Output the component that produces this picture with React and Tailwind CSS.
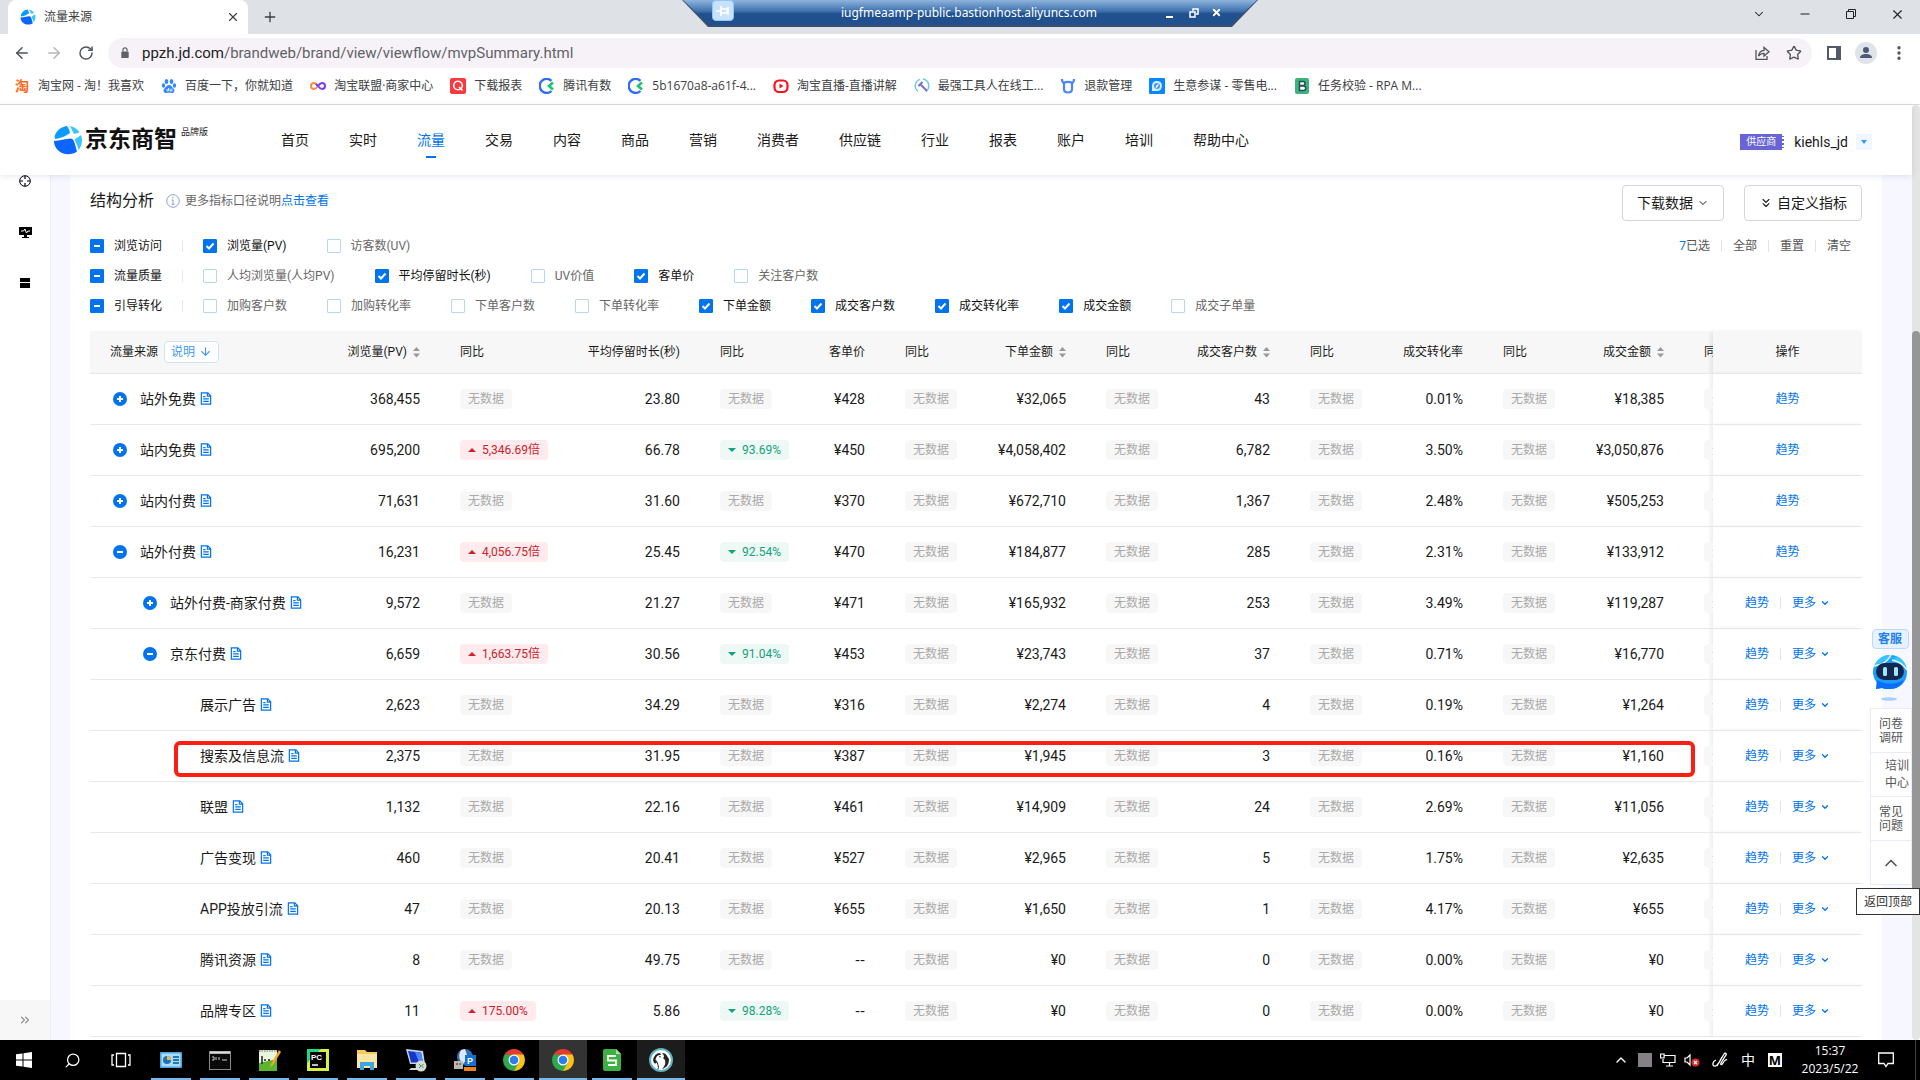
import React from "react";
import {
  ArrowLeft, ArrowRight, RotateCw, X, Plus, Minus, ChevronDown, ChevronUp, Star, MoreVertical,
  ChevronsDown, ChevronsRight, Search, ArrowDown,
} from "lucide-react";

const UI = "font-['Open_Sans','Noto_Sans_CJK_SC',sans-serif]";

function Globe({ className }) {
  return (
    <svg viewBox="0 0 30 30" className={className} aria-hidden="true">
      <path d="M2 10C4 5 9 1.500 14 1c1.500 2 2.500 4 3 7-4 3-8 5-14.500 6C1.500 13 1.500 11.500 2 10z" fill="#0a9bff" />
      <path d="M17 1c4 .5 7.500 3 9.500 6.500L21 9c-1-2-2.500-5-4-8z" fill="#38c6ff" />
      <path d="M28 10c2 5 1 11-2.500 15-.5-3-2-6.500-4-10.500z" fill="#3cc4ff" />
      <path d="M1 16c6 0 11-2.500 16.500-2.500 3.500 0 4 4 6.500 13C20 29.500 14 30 9 28 4 25.500 1 21 1 16z" fill="#0a66ff" />
    </svg>
  );
}

function ChromeLogo() {
  return (
    <svg viewBox="0 0 24 24" className="h-6 w-6" aria-hidden="true">
      <path d="M12 12 2.5 6.500A11 11 0 0 1 21.500 6.500Z" fill="#e33b2e" />
      <path d="M12 12 21.500 6.500A11 11 0 0 1 12 23Z" fill="#fbc116" />
      <path d="M12 12V23A11 11 0 0 1 2.500 6.500Z" fill="#2da94f" />
      <path d="M12 6.500h9.500L17 15z" fill="#fbc116" />
      <path d="M7.200 14.700 2.500 6.500 12 7z" fill="#2da94f" />
      <path d="m16.800 14.700L12 23l-4.800-8.300z" fill="#2da94f" />
      <circle cx="12" cy="12" r="5.500" fill="#fff" />
      <circle cx="12" cy="12" r="4.300" fill="#2f7cf0" />
    </svg>
  );
}

const bookmarks = [
  ["淘宝网 - 淘！我喜欢", "tao"],
  ["百度一下，你就知道", "paw"],
  ["淘宝联盟·商家中心", "inf"],
  ["下载报表", "q"],
  ["腾讯有数", "c"],
  ["5b1670a8-a61f-4...", "c"],
  ["淘宝直播-直播讲解", "live"],
  ["最强工具人在线工...", "tool"],
  ["退款管理", "bull"],
  ["生意参谋 - 零售电...", "comp"],
  ["任务校验 - RPA M...", "b"],
];

function BookmarkIcon({ kind }) {
  if (kind === "tao") return <span className="w-4 text-center text-sm font-bold leading-4 text-[#ff6a1a]">淘</span>;
  const art = {
    paw: (
      <g fill="#3385ff">
        <ellipse cx="5.500" cy="3.500" rx="1.800" ry="2.500" /><ellipse cx="10.500" cy="3.500" rx="1.800" ry="2.500" />
        <ellipse cx="2.500" cy="7.500" rx="1.600" ry="2.200" /><ellipse cx="13.500" cy="7.500" rx="1.600" ry="2.200" />
        <path d="M8 7c2 0 3 2 4.500 3.500 2 2 .5 5-2 4.500-1.600-.3-3.400-.3-5 0-2.500.5-4-2.500-2-4.500C5 9 6 7 8 7z" />
        <path d="M6 11v2h1.500v-3M9 10.500V13h2v-2.500" fill="none" stroke="#fff" strokeWidth=".8" />
      </g>
    ),
    inf: (
      <g fill="none" strokeWidth="2">
        <path d="M8 8C6 5.500 5 5 4 5a3 3 0 0 0 0 6c1.500 0 2.500-1 4-3" stroke="#ff8a3c" />
        <path d="M8 8c1.500-2 2.500-3 4-3a3 3 0 0 1 0 6c-1.500 0-2.500-1-4-3L6 5.800" stroke="#7a3cf0" />
      </g>
    ),
    q: (
      <g>
        <rect width="16" height="16" rx="2" fill="#f9393f" />
        <circle cx="8" cy="7.500" r="4.300" fill="none" stroke="#fff" strokeWidth="1.600" />
        <path d="m9 9 3.500 3.500" stroke="#fff" strokeWidth="1.600" />
      </g>
    ),
    c: (
      <g fill="none">
        <path d="M12.500 2.800A7 7 0 1 0 12.500 13" stroke="#2f6bff" strokeWidth="2.400" />
        <path d="m14 4.500-4 3.500 4 3.500" stroke="#1fc46a" strokeWidth="2.600" />
      </g>
    ),
    live: (
      <g>
        <rect x="1.500" y="2.500" width="13" height="11.500" rx="4.500" fill="none" stroke="#f5141e" strokeWidth="2.200" />
        <path d="M6.500 5.500v5l4-2.500z" fill="#f5141e" />
      </g>
    ),
    tool: (
      <g fill="none">
        <path d="M6 1.300A7 7 0 0 0 4 13.500M9 1a7 7 0 0 1 3 12.500" stroke="#63cbe8" strokeWidth="1.400" />
        <path d="m6 6 7 7M4.500 8 8.500 4" stroke="#7c6fc8" strokeWidth="2" />
      </g>
    ),
    bull: (
      <g fill="none" stroke="#4a86ff" strokeWidth="2.200">
        <path d="M4 5v6c0 2.500 2 3.500 4 3.500s4-1 4-3.500V5c-1.500-1.500-6.500-1.500-8 0z" />
        <path d="M4 5C2.500 4.500 2 3 2 1M12 5c1.500-.5 2-2 2-4" />
      </g>
    ),
    comp: (
      <g>
        <rect width="16" height="16" rx="1" fill="#0a86ff" />
        <path d="M3 13V7a5 5 0 1 1 5 6z" fill="#d8ecff" />
        <circle cx="8" cy="8" r="3" fill="#3b9bff" /><path d="m10.500 5-2 4-2.500 2 1.500-3.500z" fill="#fff" />
      </g>
    ),
    b: (
      <g>
        <rect x="1" width="14" height="16" rx="2" fill="#3db37a" />
        <path d="M5.500 3.500h3.500a1.800 1.800 0 0 1 0 4H5.500zM5.500 8h4a2.200 2.200 0 0 1 0 4.500h-4z" fill="#fff" stroke="#1f4f5a" strokeWidth="1.500" />
      </g>
    ),
  };
  return <svg viewBox="0 0 16 16" className="h-4 w-4 shrink-0" aria-hidden="true">{art[kind]}</svg>;
}

function BrowserChrome() {
  return (
    <header className={`shrink-0 ${UI}`}>
      <div className="relative flex h-[34px] items-center bg-[#dee1e6] pl-2">
        <div className="flex h-full w-[240px] items-center rounded-t-lg bg-white pl-3 pr-2">
          <Globe className="h-4 w-4" />
          <span className="ml-2 flex-1 text-xs text-[#3c4043]">流量来源</span>
          <button aria-label="关闭标签页" className="text-[#3c4043]"><X size={14} strokeWidth={2} /></button>
        </div>
        <button aria-label="新标签页" className="ml-[14px] text-[#3c4043]"><Plus size={16} strokeWidth={2} /></button>
        <div className="ml-auto flex h-7 items-center self-start text-[#202124]">
          <button aria-label="搜索标签页" className="grid w-[46px] place-items-center"><ChevronDown size={14} strokeWidth={1.8} /></button>
          <button aria-label="最小化" className="grid w-[46px] place-items-center"><Minus size={14} strokeWidth={1.8} /></button>
          <button aria-label="还原" className="grid w-[46px] place-items-center">
            <svg viewBox="0 0 12 12" className="h-3 w-3" fill="none" stroke="currentColor"><path d="M1.500 3.500h7v7h-7zM3.500 3.500v-2h7v7h-2" /></svg>
          </button>
          <button aria-label="关闭" className="grid w-[46px] place-items-center"><X size={15} strokeWidth={1.8} /></button>
        </div>
        <div className="absolute left-[682px] top-0 h-[27px] w-[576px] bg-[#3a4f70] [clip-path:polygon(0_0,100%_0,550px_100%,26px_100%)]">
          <div className="flex h-[25px] items-center bg-gradient-to-b from-[#8fb4dd] via-[#3e71ae] via-45% to-[#21508f] to-55% pl-[30px] pr-[36px] text-white [clip-path:polygon(1px_0,575px_0,549px_100%,27px_100%)]">
            <span className="grid h-[21px] w-[22px] self-start place-items-center rounded-sm border border-[#90c8f8] bg-[#c8e2fb]">
              <svg viewBox="0 0 14 10" className="h-[10px] w-[14px]" stroke="#fff" fill="none" strokeWidth="1.600"><path d="M0 5h5M5 0v10M5 3h6v4H5M12 1v8" /></svg>
            </span>
            <span className="flex-1 pl-[38px] text-center font-['Noto_Sans'] text-xs">iugfmeaamp-public.bastionhost.aliyuncs.com</span>
            <button aria-label="最小化远程会话" className="mt-2 h-[2px] w-[7px] bg-white" />
            <button aria-label="还原远程会话" className="ml-4">
              <svg viewBox="0 0 10 10" className="h-[10px] w-[10px]" fill="none" stroke="#fff" strokeWidth="1.500"><path d="M1 4h5v5H1zM4 3V1h5v5H7" /></svg>
            </button>
            <button aria-label="关闭远程会话" className="ml-3"><X size={11} strokeWidth={4} /></button>
          </div>
        </div>
      </div>
      <div className="flex h-[38px] items-center bg-white pl-[13px] pr-3 text-[#505458]">
        <button aria-label="后退"><ArrowLeft size={18} /></button>
        <button aria-label="前进" className="ml-[14px] text-[#b4b6b9]"><ArrowRight size={18} /></button>
        <button aria-label="刷新" className="ml-[15px]"><RotateCw size={16} strokeWidth={2.2} /></button>
        <div className="ml-[14px] flex h-[30px] flex-1 items-center rounded-full bg-[#f7f2f7] pl-3 pr-[10px]">
          <svg viewBox="0 0 10 13" className="h-3 w-[10px]" aria-hidden="true"><rect x="1" y="5" width="8" height="7" rx="1" fill="#5f6368" /><path d="M2.800 5V3.200a2.200 2.200 0 0 1 4.400 0V5" fill="none" stroke="#5f6368" strokeWidth="1.300" /></svg>
          <span className="ml-3 flex-1 font-['Roboto'] text-[15px] text-[#5f6368]"><span className="text-[#202124]">ppzh.jd.com</span>/brandweb/brand/view/viewflow/mvpSummary.html</span>
          <button aria-label="分享">
            <svg viewBox="0 0 16 16" className="h-4 w-4" fill="none" stroke="currentColor" strokeWidth="1.300"><path d="M2 5v9.300h11V11M4.500 11c.5-3.500 2.500-5.500 5.500-5.700V2.500L15 6.800l-5 4.300V8.300C7.500 8.300 6 9 4.500 11z" /></svg>
          </button>
          <button aria-label="收藏" className="ml-4"><Star size={16} strokeWidth={2} /></button>
        </div>
        <button aria-label="侧边栏" className="ml-[15px]">
          <svg viewBox="0 0 14 14" className="h-[14px] w-[14px]"><path d="M1 1h12v12H1z" fill="none" stroke="#53586b" strokeWidth="2" /><path d="M9 0h5v14H9z" fill="#53586b" /></svg>
        </button>
        <button aria-label="用户" className="ml-[14px] grid h-[22px] w-[22px] place-items-center rounded-full bg-[#dfe3ea]">
          <svg viewBox="0 0 14 14" className="h-[14px] w-[14px]" fill="#4d5776"><circle cx="7" cy="4" r="3" /><path d="M1 12c0-3 3-4 6-4s6 1 6 4z" /></svg>
        </button>
        <button aria-label="菜单" className="ml-[13px]"><MoreVertical size={18} strokeWidth={2.5} /></button>
      </div>
      <nav className="flex h-[33px] items-center gap-[17px] border-b border-[#d9dbde] bg-white pb-1 pl-[14px] text-xs text-[#3c4043]">
        {bookmarks.map(([t, k]) => (
          <a key={t} href="#" className="flex items-center gap-2 whitespace-nowrap"><BookmarkIcon kind={k} />{t}</a>
        ))}
      </nav>
    </header>
  );
}

const navItems = ["首页", "实时", "流量", "交易", "内容", "商品", "营销", "消费者", "供应链", "行业", "报表", "账户", "培训", "帮助中心"];

function SiteHeader() {
  return (
    <div className="relative z-10 flex h-[70px] shrink-0 items-center bg-white pl-[53px] pr-10 shadow-[0_1px_6px_rgba(60,70,120,0.14)]">
      <Globe className="h-[30px] w-[30px]" />
      <span className="ml-[2px] text-[23px] font-bold leading-7 text-[#111]">京东商智</span>
      <span className="ml-1 mb-4 w-[100px] text-[9px] leading-3 text-[#222]">品牌版</span>
      <nav className="flex gap-10 text-sm text-[#1a1a1a]">
        {navItems.map((t) => (
          <a key={t} href="#" className={t === "流量" ? "relative text-[#0073ed]" : "whitespace-nowrap"}>
            {t}
            {t === "流量" && <span className="absolute -bottom-2 left-[9px] h-[2px] w-[10px] bg-[#0073ed]" />}
          </a>
        ))}
      </nav>
      <div className="ml-auto flex items-center pt-1">
        <span className="flex h-4 w-11 items-center justify-center border-r-2 border-dotted border-white bg-[#6a64d6] text-[10px] leading-4 text-white">供应商</span>
        <span className="ml-[10px] text-sm text-[#1a1a1a]">kiehls_jd</span>
        <button aria-label="账户菜单" className="ml-2 grid h-4 w-4 place-items-center bg-[#eef6ff]">
          <svg viewBox="0 0 6 4" className="h-1 w-[6px]"><path d="M0 0h6L3 4z" fill="#3d98f2" /></svg>
        </button>
      </div>
    </div>
  );
}

function Check({ label, on = false, mixed = false }) {
  const marked = on || mixed;
  return (
    <label className={`flex items-center gap-[10px] whitespace-nowrap ${marked ? "text-[#111]" : "text-[#666]"}`}>
      <span className="relative h-[14px] w-[14px]">
        <input
          type="checkbox"
          defaultChecked={marked}
          className="block h-[14px] w-[14px] appearance-none rounded-[1px] border border-[#b5d5fb] bg-white checked:border-[#0073ed] checked:bg-[#0073ed]"
        />
        {marked && (
          <svg viewBox="0 0 14 14" className="pointer-events-none absolute inset-0 h-[14px] w-[14px]" fill="none" stroke="#fff" strokeWidth="2">
            {mixed ? <path d="M4 7h6" /> : <path d="m3.500 7 2.500 2.500L10.500 4.500" />}
          </svg>
        )}
      </span>
      {label}
    </label>
  );
}

const filters = [
  ["浏览访问", [["浏览量(PV)", 1], ["访客数(UV)", 0]]],
  ["流量质量", [["人均浏览量(人均PV)", 0], ["平均停留时长(秒)", 1], ["UV价值", 0], ["客单价", 1], ["关注客户数", 0]]],
  ["引导转化", [["加购客户数", 0], ["加购转化率", 0], ["下单客户数", 0], ["下单转化率", 0], ["下单金额", 1], ["成交客户数", 1], ["成交转化率", 1], ["成交金额", 1], ["成交子单量", 0]]],
];

const rows = [
  [0, "+", "站外免费", "368,455", "", "23.80", "", "¥428", "¥32,065", "43", "0.01%", "¥18,385"],
  [0, "+", "站内免费", "695,200", "5,346.69倍", "66.78", "93.69%", "¥450", "¥4,058,402", "6,782", "3.50%", "¥3,050,876"],
  [0, "+", "站内付费", "71,631", "", "31.60", "", "¥370", "¥672,710", "1,367", "2.48%", "¥505,253"],
  [0, "-", "站外付费", "16,231", "4,056.75倍", "25.45", "92.54%", "¥470", "¥184,877", "285", "2.31%", "¥133,912"],
  [1, "+", "站外付费-商家付费", "9,572", "", "21.27", "", "¥471", "¥165,932", "253", "3.49%", "¥119,287"],
  [1, "-", "京东付费", "6,659", "1,663.75倍", "30.56", "91.04%", "¥453", "¥23,743", "37", "0.71%", "¥16,770"],
  [2, "", "展示广告", "2,623", "", "34.29", "", "¥316", "¥2,274", "4", "0.19%", "¥1,264"],
  [2, "", "搜索及信息流", "2,375", "", "31.95", "", "¥387", "¥1,945", "3", "0.16%", "¥1,160"],
  [2, "", "联盟", "1,132", "", "22.16", "", "¥461", "¥14,909", "24", "2.69%", "¥11,056"],
  [2, "", "广告变现", "460", "", "20.41", "", "¥527", "¥2,965", "5", "1.75%", "¥2,635"],
  [2, "", "APP投放引流", "47", "", "20.13", "", "¥655", "¥1,650", "1", "4.17%", "¥655"],
  [2, "", "腾讯资源", "8", "", "49.75", "", "--", "¥0", "0", "0.00%", "¥0"],
  [2, "", "品牌专区", "11", "175.00%", "5.86", "98.28%", "--", "¥0", "0", "0.00%", "¥0"],
];

const headers = [
  ["浏览量(PV)", true, "w-[110px]", "w-[128px]"],
  ["平均停留时长(秒)", false, "w-[132px]", "w-[100px]"],
  ["客单价", false, "w-[85px]", "w-[92px]"],
  ["下单金额", true, "w-[109px]", "w-[92px]"],
  ["成交客户数", true, "w-[112px]", "w-[92px]"],
  ["成交转化率", false, "w-[101px]", "w-[92px]"],
  ["成交金额", true, "w-[109px]", "w-[29px]"],
];

const indents = ["pl-[23px]", "pl-[53px]", "pl-[110px]"];

function Tag({ value, dir }) {
  const base = "inline-flex h-5 items-center rounded-sm px-2 text-xs whitespace-nowrap align-middle";
  if (!value) return <span className={`${base} bg-[#f7f7f7] text-[#aaa]`}>无数据</span>;
  const up = dir === "up";
  return (
    <span className={`${base} ${up ? "bg-[#ffebee] text-[#cc2229]" : "bg-[#eef8f5] text-[#12a27b]"}`}>
      <svg viewBox="0 0 8 4" className="mr-[6px] h-1 w-2"><path d={up ? "M0 4h8L4 0z" : "M0 0h8L4 4z"} fill="currentColor" /></svg>
      {value}
    </span>
  );
}

function Sorter() {
  return (
    <svg viewBox="0 0 7 12" className="ml-[6px] h-3 w-[7px]" fill="#999"><path d="M0 5h7L3.500 1zM0 7.500h7l-3.500 4z" /></svg>
  );
}

function DocIcon() {
  return (
    <svg viewBox="0 0 12 14" className="ml-1 h-[13px] w-3 shrink-0" fill="none" stroke="#0073ed" strokeWidth="1.300">
      <path d="M1 1h7l3 3v9H1zM7.500 1v3.500H11M3 5h2.500M3 7.500h6M3 10h6" />
    </svg>
  );
}

function Toggle({ sign }) {
  return (
    <button aria-label={sign === "+" ? "展开" : "收起"} className="mr-[13px] h-[14px] w-[14px]">
      <svg viewBox="0 0 14 14" className="h-[14px] w-[14px]"><circle cx="7" cy="7" r="7" fill="#0073ed" /><path d={sign === "+" ? "M4 7h6M7 4v6" : "M4 7h6"} stroke="#fff" strokeWidth="2" /></svg>
    </button>
  );
}

function DataTable() {
  return (
    <div className="relative mt-[10px]">
      <table className="w-full table-fixed border-collapse text-[#1a1a1a]">
        <thead>
          <tr className="h-[42px] border-b border-[#e8e8ea] bg-[#f7f7f7] text-xs">
            <th className="pl-5 text-left font-normal">
              <div className="flex items-center">流量来源
                <button className="ml-[6px] flex h-[22px] items-center rounded-sm border border-[#cfe4fb] bg-white px-[6px] text-[#3d98f2]">说明<ArrowDown size={13} strokeWidth={2} className="ml-1" /></button>
              </div>
            </th>
            {headers.map(([t, sort, w, w2]) => (
              <React.Fragment key={t}>
                <th className={`pr-5 font-normal ${w}`}><div className="flex items-center justify-end whitespace-nowrap">{t}{sort && <Sorter />}</div></th>
                <th className={`overflow-hidden whitespace-nowrap pl-5 text-left font-normal ${w2}`}>同比</th>
              </React.Fragment>
            ))}
            <th className="w-[149px] font-normal shadow-[-3px_0_3px_rgba(60,40,60,0.07)]">操作</th>
          </tr>
        </thead>
        <tbody>
          {rows.map(([lvl, sign, name, pv, pvY, stay, stayY, price, amt, cust, rate, deal]) => (
            <tr key={name} className="h-[51px] border-b border-[#e8e8ea] text-sm">
              <td className={indents[lvl]}>
                <div className="flex items-center whitespace-nowrap">{sign && <Toggle sign={sign} />}{name}<DocIcon /></div>
              </td>
              {[[pv, pvY, "up"], [stay, stayY, "down"], [price], [amt], [cust], [rate], [deal]].map(([v, y, d], i) => (
                <React.Fragment key={i}>
                  <td className={v === "--" ? "pr-5 text-right font-['DejaVu_Sans']" : "pr-5 text-right"}>{v}</td>
                  <td className="overflow-hidden pl-5"><Tag value={y} dir={d} /></td>
                </React.Fragment>
              ))}
              <td className="shadow-[-3px_0_3px_rgba(60,40,60,0.07)]">
                <div className="flex items-center justify-center text-xs text-[#0073ed]">
                  <a href="#">趋势</a>
                  {lvl > 0 && (
                    <>
                      <span className="mx-[11px] h-3 w-px bg-[#e4e4e4]" />
                      <button className="flex items-center">更多<ChevronDown size={10} strokeWidth={3} className="ml-1" /></button>
                    </>
                  )}
                </div>
              </td>
            </tr>
          ))}
        </tbody>
      </table>
      <div className="pointer-events-none absolute left-[84px] right-[167px] top-[410px] h-9 rounded-md border-4 border-[#fc1e12]" />
    </div>
  );
}

function SideTools() {
  const item = "grid h-11 place-items-center border-b border-[#ebebf5] bg-white text-xs leading-[14px] text-[#555]";
  return (
    <div className="absolute right-0 top-[454px] z-10 flex w-16 flex-col items-end">
      <div className="mr-[11px] flex w-[38px] flex-col items-center">
        <span className="relative h-5 w-[37px] rounded-sm border border-[#bcd9fb] bg-[#e6f2ff] text-center text-xs font-bold leading-[18px] text-[#1f80ee]">客服</span>
        <svg viewBox="0 0 36 50" className="mt-[5px] h-[50px] w-9" aria-hidden="true">
          <path d="M18 1a17 17 0 0 1 17 17c0 10-7 17-17 17-3 0-6 0-8-1l-6 1 1-6A17 17 0 0 1 18 1z" fill="#1d9bff" />
          <path d="M2 14C4 6 10 1 17 1l4 3C15 5 8 8 2 14zM24 2c5 2 9 6 10 11-4-3-9-5-14-6z" fill="#35c5ff" />
          <path d="M1 12c8 0 15-5 18-11M20 6c6 1 11 4 15 10" stroke="#e5f7ff" strokeWidth="1.500" fill="none" />
          <path d="M5 26c8 5 18 5 27 0-3 6-8 9-14 9-3 0-6 0-8-1l-6 1z" fill="#0b6ef8" />
          <rect x="4" y="9" width="28" height="17" rx="8.500" fill="#14284f" />
          <rect x="11" y="13" width="4" height="9" rx="1.500" fill="#9fe6ff" /><rect x="22" y="13" width="4" height="9" rx="1.500" fill="#9fe6ff" />
          <ellipse cx="17" cy="45" rx="8" ry="1.800" fill="#a9d0f8" />
        </svg>
      </div>
      <div className="mr-2 mt-1 w-[42px] border border-b-0 border-[#ebebf5]">
        <a href="#" className={item}><span className="w-6">问卷调研</span></a>
        <a href="#" className={item}><span className="ml-3 w-6 leading-[17px]">培训中心</span></a>
        <a href="#" className={item}><span className="w-6">常见问题</span></a>
        <button aria-label="返回顶部" className={`${item} w-full`}><ChevronUp size={20} strokeWidth={2} /></button>
      </div>
      <span role="tooltip" className="mt-[3px] flex h-[27px] w-16 items-center justify-center border border-[#333] bg-white text-xs text-[#333]">返回顶部</span>
    </div>
  );
}

function Sidebar() {
  return (
    <aside className="flex w-[51px] shrink-0 flex-col items-center border-r border-[#ececf3] bg-white text-black">
      <svg viewBox="0 0 12 12" className="h-3 w-3" fill="none" stroke="currentColor"><circle cx="6" cy="6" r="5.300" /><path d="M6 1v3M6 8v3M1 6h3M8 6h3" strokeWidth="1.200" /></svg>
      <svg viewBox="0 0 13 13" className="mt-[39px] h-[13px] w-[13px]"><path d="M0 1h13v8H8v2h2v1H3v-1h2V9H0z" fill="currentColor" /><path d="M2 5h2.500l1.500-2 1.500 4L9 5h2" stroke="#fff" fill="none" /></svg>
      <svg viewBox="0 0 10 10" className="mt-[39px] h-[10px] w-[10px]"><path d="M0 0h10v4H0zM0 5h10v5H0z" fill="currentColor" /></svg>
      <button aria-label="展开菜单" className="mt-auto grid h-10 w-full place-items-center bg-[#f7f7f7] text-[#888]"><ChevronsRight size={14} strokeWidth={2} /></button>
    </aside>
  );
}

const taskIcons = [
  <svg viewBox="0 0 24 24"><rect x="1" y="4" width="22" height="16" rx="1" fill="#4aa5e0" /><rect x="2.500" y="5.500" width="19" height="13" fill="#a9dcf8" /><circle cx="8" cy="12" r="4" fill="#1c72c0" /><path d="M8 12V8a4 4 0 0 1 4 4z" fill="#f7b63a" /><path d="M14 9h6M14 12h6M14 15h6" stroke="#2578b5" strokeWidth="2" /></svg>,
  <svg viewBox="0 0 24 24"><rect x="1" y="3" width="22" height="19" fill="#888" /><rect x="2" y="6" width="20" height="15" fill="#0a0a0a" /><path d="M2 4.500h20" stroke="#ddd" strokeWidth="2" /><path d="M4 9h2v3H4M8 9v3M11 9v3M14 12h5" stroke="#ccc" fill="none" /></svg>,
  <svg viewBox="0 0 24 24"><path d="M2 2h18v21H2z" fill="#e9f5dd" /><path d="M2 15 20 11v12H2z" fill="#5bb531" /><path d="M2 3h18" stroke="#a9a9a9" strokeWidth="2" strokeDasharray="1.500 1" /><path d="M5 8v8M7 12h2M11 12h2" stroke="#222" strokeWidth="1.500" /><path d="M22 2 14 16l-1 3 3-2L24 4z" fill="#f5a623" /></svg>,
  <svg viewBox="0 0 24 24"><rect x="1" y="1" width="22" height="22" fill="#d9ef45" /><path d="M1 1h14L1 15z" fill="#21d789" /><rect x="4" y="4" width="16" height="16" fill="#000" /><text x="5" y="12" fontSize="8" fontWeight="bold" fill="#fff" fontFamily="Liberation Sans">PC</text><path d="M6 17h6" stroke="#fff" strokeWidth="1.500" /></svg>,
  <svg viewBox="0 0 24 24"><path d="M2 2h8l2 2h10v14H2z" fill="#f5c95c" /><path d="M2 6h20v14H2z" fill="#fde6a2" /><path d="M5 22v-8h14v8h-4v-4H9v4z" fill="#3aa7e4" /></svg>,
  <svg viewBox="0 0 24 24"><path d="m2 1 17 2 2 13-15 0z" fill="#c9d4e2" /><path d="m4 3 13 1.500 2 10H7z" fill="#1437c8" /><path d="M11 3.800 17 4.500l2 10h-4z" fill="#4b86ff" /><path d="M7 20h8v2H5z" fill="#cfd3d8" /><circle cx="17" cy="18" r="5.500" fill="#d9dbd7" /><path d="m15 16 2 2-2 2M19.500 16l-2 2 2 2" stroke="#2f9a4a" fill="none" /></svg>,
  <svg viewBox="0 0 24 24"><circle cx="12" cy="9" r="8" fill="#2f6fb5" /><path d="M8 2c-3 5-2 10 2 14l5-6-3-9z" fill="#dfe9f5" /><rect x="12" y="7" width="11" height="11" fill="#1372d0" /><text x="14" y="16" fontSize="9" fontWeight="bold" fill="#fff" fontFamily="Liberation Sans">P</text><rect x="1" y="13" width="9" height="8" fill="#b8b8b8" /><path d="M3 15h2v2H3z" fill="#e33" /><path d="M6 15h2v2H6z" fill="#3a3" /><rect x="11" y="19" width="12" height="4" fill="#f08020" /></svg>,
  <ChromeLogo />,
  <ChromeLogo />,
  <svg viewBox="0 0 24 24"><path d="M3 3a2 2 0 0 1 2-2h11l5 5v15a2 2 0 0 1-2 2H5a2 2 0 0 1-2-2z" fill="#3cb043" /><path d="M16 1v5h5z" fill="#a5dca8" /><path d="M16 8H8v4.500h8V17H8" fill="none" stroke="#fff" strokeWidth="1.800" /></svg>,
  <svg viewBox="0 0 24 24"><circle cx="12" cy="12" r="11" fill="#fff" stroke="#5fb3c2" strokeWidth="2" /><path d="M4 12c1-4 3-7 7-7l1 2C8 7 7 9 6.500 12L8 13c0 2-1 3-3 2z" fill="#222" /><path d="M13 5c3 0 4 1 5 3l2 3c0 6-3 9-7 10 3-3 4-6 3-9l-2-2 1-1c0-2-1-3-2-4z" fill="#222" /><path d="m10 8 2 .5-1 1.500z" fill="#222" /><path d="M8 14c1 3 2 5 1 7" stroke="#222" fill="none" /></svg>,
];

function Taskbar() {
  return (
    <footer className={`flex h-10 shrink-0 items-center bg-black text-white ${UI}`}>
      <button aria-label="开始" className="grid w-12 place-items-center">
        <svg viewBox="0 0 16 16" className="h-4 w-4" fill="#fff"><path d="M0 2.300 6.500 1.400v6.100H0zM7.500 1.200 16 0v7.500H7.500zM0 8.500h6.500v6.100L0 13.700zM7.500 8.500H16V16l-8.500-1.200z" /></svg>
      </button>
      <button aria-label="搜索" className="grid w-12 place-items-center"><Search size={17} strokeWidth={1.8} className="-scale-x-100" /></button>
      <button aria-label="任务视图" className="grid w-[49px] place-items-center">
        <svg viewBox="0 0 20 16" className="h-4 w-5" fill="none" stroke="#fff" strokeWidth="1.300"><path d="M5.500 1.500h9v13h-9zM3 3H1v10h2M17 3h2v10h-2" /></svg>
      </button>
      <div className="ml-px flex">
        {taskIcons.map((icon, i) => (
          <button key={i} aria-label={`任务 ${i + 1}`} className={`relative ml-px grid h-10 w-12 place-items-center ${i === 8 ? "bg-[#333]" : i === 10 ? "bg-[#1c1c1c]" : ""}`}>
            <span className="block h-6 w-6">{icon}</span>
            <span className={`absolute bottom-0 h-[2px] bg-[#76b9ed] ${i === 8 || i === 10 ? "inset-x-0" : "inset-x-1"}`} />
          </button>
        ))}
      </div>
      <div className="ml-auto flex items-center">
        <ChevronUp size={16} strokeWidth={2} />
        <span className="ml-[9px] h-[14px] w-[14px] bg-[#858085]" />
        <svg viewBox="0 0 16 14" className="ml-2 h-[14px] w-4" fill="none" stroke="#fff" strokeWidth="1.200"><path d="M4 2.500h11v7H3V6M6 13h7M9.500 9.500V13M.6 1h3.500v4H.6z" /></svg>
        <svg viewBox="0 0 16 14" className="ml-2 h-[14px] w-4" fill="none" stroke="#fff" strokeWidth="1.200"><path d="M1 5h2l3-3v10L3 9H1z" /><circle cx="11.500" cy="9.500" r="4" fill="#e02b2b" stroke="none" /><path d="m10 8 3 3M13 8l-3 3" /></svg>
        <svg viewBox="0 0 16 16" className="ml-3 h-4 w-4" fill="none" stroke="#fff" strokeWidth="1.300"><path d="M4 8c-3 1-4 5-2 6 3 1 4-2 6-5l4-7c1-2 3 0 2 1L9 11c-1 2 1 2 2 0s3-4 4-3M5 14l5-9" /></svg>
        <span className="ml-3 w-4 text-center text-sm leading-4">中</span>
        <span className="ml-3 grid h-[14px] w-[14px] place-items-center bg-white text-[13px] font-bold leading-[14px] text-black">M</span>
        <span className="ml-[14px] w-[68px] text-center text-xs leading-[18px]">15:37<br />2023/5/22</span>
        <svg viewBox="0 0 16 16" className="ml-[14px] h-4 w-4" fill="none" stroke="#fff" strokeWidth="1.300"><path d="M.7 1h14.600v10.500H10L8 14.500l-2-3H.7z" /></svg>
        <span className="ml-[21px] mr-1 h-10 w-px bg-[#444]" />
      </div>
    </footer>
  );
}

export default function App() {
  return (
    <div className="flex h-screen flex-col overflow-hidden bg-white font-['Roboto','Noto_Sans_CJK_SC',sans-serif]">
      <BrowserChrome />
      <div className="relative flex min-h-0 flex-1">
        <div className="flex min-w-0 flex-1 flex-col">
          <SiteHeader />
          <div className="flex min-h-0 flex-1 bg-[#f7f7ff]">
            <Sidebar />
            <main className="ml-[19px] mr-[30px] min-w-0 flex-1 overflow-hidden bg-white px-5 pt-[10px]">
              <div className="flex h-9 items-start">
                <div className="flex h-8 items-center">
                  <h1 className="text-base text-[#1a1a1a]">结构分析</h1>
                  <svg viewBox="0 0 14 14" className="ml-3 h-[14px] w-[14px]" fill="none" stroke="#8f9fc9"><circle cx="7" cy="7" r="6.300" /><path d="M7 3v1.500M5.500 6H7v4M5.500 10.300h3" /></svg>
                  <p className="ml-[5px] text-xs text-[#666]">更多指标口径说明<a href="#" className="text-[#0073ed]">点击查看</a></p>
                </div>
                <button className="ml-auto flex h-9 items-center rounded-sm border border-[#d5d5dc] px-[14px] text-sm text-[#1a1a1a]">下载数据<ChevronDown size={12} strokeWidth={2} className="ml-1" /></button>
                <button className="ml-5 flex h-9 items-center rounded-sm border border-[#d5d5dc] px-[14px] text-sm text-[#1a1a1a]"><ChevronsDown size={14} strokeWidth={2} className="mr-1" />自定义指标</button>
              </div>
              <div className="mt-[10px] flex justify-between text-xs">
                <div>
                  {filters.map(([group, items]) => (
                    <div key={group} className="flex h-[30px] items-center">
                      <Check label={group} mixed />
                      <span className="ml-5 mr-5 h-3 w-px bg-[#e8e8e8]" />
                      <div className="flex gap-10">{items.map(([t, on]) => <Check key={t} label={t} on={!!on} />)}</div>
                    </div>
                  ))}
                </div>
                <div className="flex h-[30px] items-center divide-x divide-[#e4e4e4] leading-3 text-[#555]">
                  <span className="pr-[11px]"><span className="text-[#0073ed]">7</span>已选</span>
                  {["全部", "重置", "清空"].map((t) => <button key={t} className="px-[11px]">{t}</button>)}
                </div>
              </div>
              <DataTable />
            </main>
          </div>
        </div>
        <div className="w-2 shrink-0 rounded-full bg-[#e4e4e4] pt-[226px]"><div className="h-[566px] rounded-full bg-[#969696]" /></div>
        <div className="absolute right-0 top-[70px]"><SideTools /></div>
      </div>
      <Taskbar />
    </div>
  );
}
